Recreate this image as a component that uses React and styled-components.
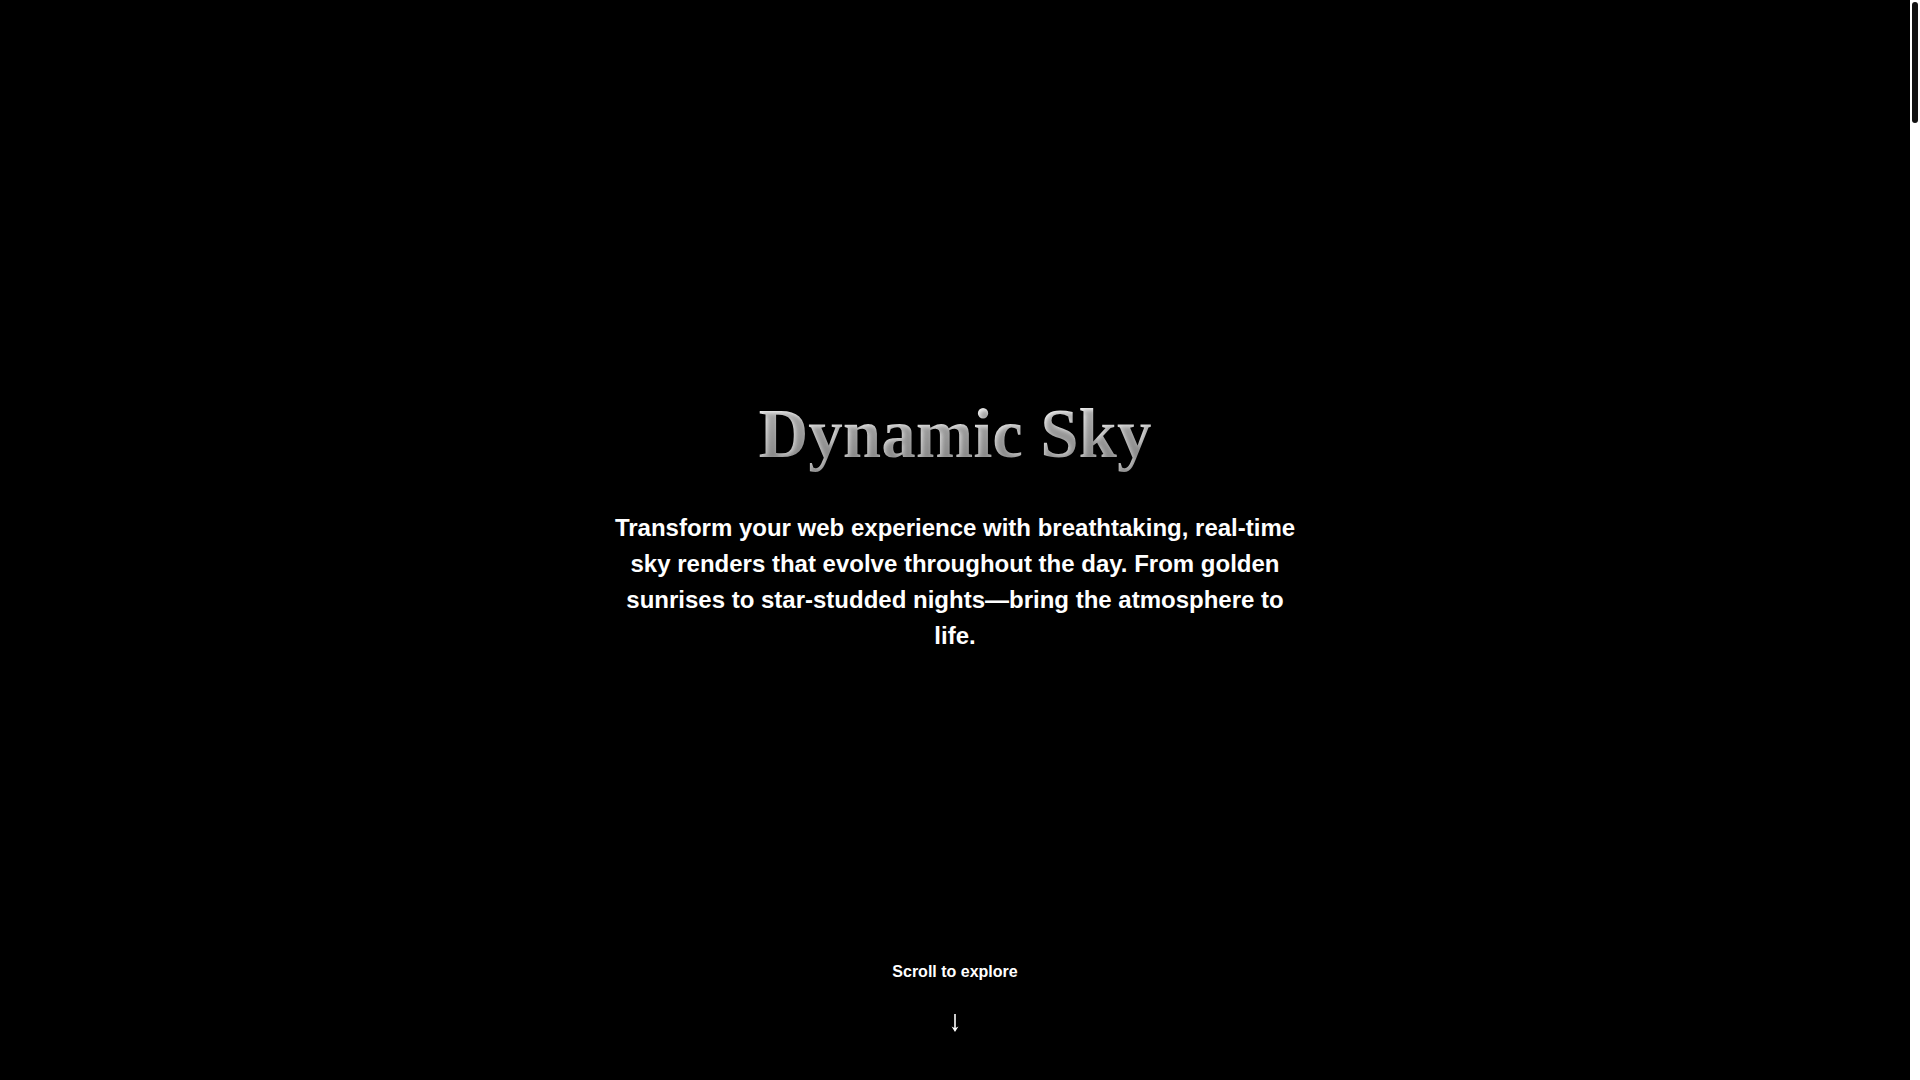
import { useState } from "react";
import styled, { createGlobalStyle } from "styled-components";

const GlobalStyle = createGlobalStyle`
html, body {
    margin: 0;
    padding: 0;
    background: #000;
    overflow: hidden;
}
body {
    font-family: "Liberation Sans", Arial, sans-serif;
    color: #fff;
}
`
const Shell = styled.div`
display: flex;
height: 100vh;
background: #000;
`
const Scroller = styled.main`
flex: 1;
overflow-y: auto;
scrollbar-width: none;
&::-webkit-scrollbar {
    display: none;
}
`
const Rail = styled.div`
position: relative;
width: 10px;
flex-shrink: 0;
background: #fff;
`
const Thumb = styled.div`
position: absolute;
left: 2px;
width: 6px;
height: 121px;
border-radius: 3px;
background: #111;
`
const Hero = styled.section`
display: flex;
flex-direction: column;
align-items: center;
height: 100vh;
`
const Content = styled.div`
flex: 1;
display: flex;
flex-direction: column;
align-items: center;
justify-content: center;
padding-top: 87px;
text-align: center;
`
const Title = styled.h1`
margin: 0 0 37px;
font-family: "Liberation Serif", "Times New Roman", serif;
font-size: 69px;
font-weight: 700;
line-height: 1.12;
background: linear-gradient(180deg, #ffffff 0%, #b4b4b4 100%);
-webkit-background-clip: text;
background-clip: text;
-webkit-text-fill-color: transparent;
text-shadow: 2px 2px 4px rgba(0, 0, 0, 0.3);
`
const Tagline = styled.p`
margin: 0;
max-width: 700px;
font-size: 24px;
font-weight: 700;
line-height: 1.5;
color: #fff;
`
const ScrollHint = styled.div`
display: flex;
flex-direction: column;
align-items: center;
gap: 33px;
padding-bottom: 48px;
font-weight: 700;
`
const HintLabel = styled.span`
font-size: 16px;
`
const ArrowDown = styled.svg`
display: block;
width: 12px;
height: 18px;
`
const SkyTrack = styled.section`
height: 764vh;
`

const App = () => {
    const [progress, setProgress] = useState( 0 );
    const handleScroll = ( e ) => {
        const el = e.currentTarget;
        const max = el.scrollHeight - el.clientHeight;
        setProgress( max > 0 ? el.scrollTop / max : 0 );
    }
    return (
        <>
            <GlobalStyle />
            <Shell>
                <Scroller onScroll={handleScroll}>
                    <Hero>
                        <Content>
                            <Title>Dynamic Sky</Title>
                            <Tagline>
                                Transform your web experience with breathtaking, real-time sky renders that evolve throughout the day. From golden sunrises to star-studded nights—bring the atmosphere to life.
                            </Tagline>
                        </Content>
                        <ScrollHint>
                            <HintLabel>Scroll to explore</HintLabel>
                            <ArrowDown viewBox="0 0 12 18">
                                <line x1="6" y1="0" x2="6" y2="15" stroke="#fff" strokeWidth="1.6" />
                                <polygon points="2.6,12.6 6,18 9.4,12.6 6,14.2" fill="#fff" />
                            </ArrowDown>
                        </ScrollHint>
                    </Hero>
                    <SkyTrack />
                </Scroller>
                <Rail>
                    <Thumb style={{ top: `calc(2px + ${progress} * (100% - 125px))` }} />
                </Rail>
            </Shell>
        </>
    )
}
export default App;
